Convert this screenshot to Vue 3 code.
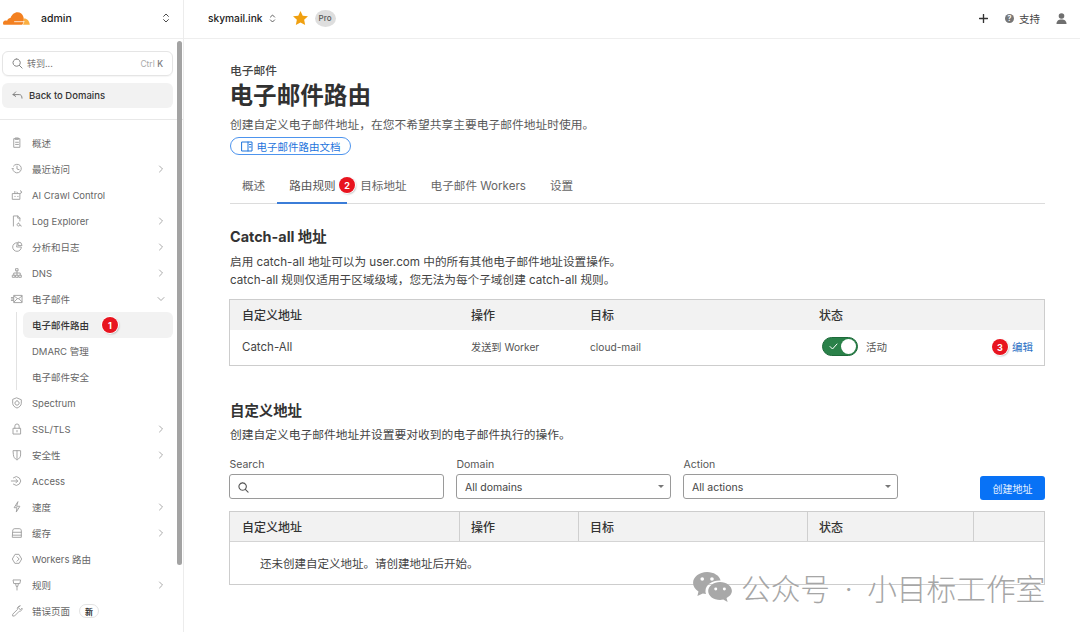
<script setup>
const navTop = [
  { label: '概述', icon: 'M5 3h8v12H5zM7 2h4v2H7zM7 8h4M7 11h4' },
  { label: '最近访问', arrow: 'right', icon: 'M4 5a6 6 0 1 1-1 4M9 5v4l3 1M2 8l1 1 1-1' },
  { label: 'AI Crawl Control', icon: 'M3 7h10v8H3zM6 7V4M10 7 9 5M6 11h.5M10 11h.5M14 3l.5 1.5L16 5l-1.500.5L14 7' },
  { label: 'Log Explorer', arrow: 'right', icon: 'M4 16V2h6l3 3v4M10 2v3h3M11 12a2 2 0 1 0 .1 0M13 15l2 1' },
  { label: '分析和日志', arrow: 'right', icon: 'M9 3a6 6 0 1 0 6 6H9zM11 2a5 5 0 0 1 5 5h-5z' },
  { label: 'DNS', arrow: 'right', icon: 'M7.500 3h3v3h-3zM3 12h3v3H3zM7.500 12h3v3h-3zM12 12h3v3h-3zM9 6v6M4.500 12V9h9v3' }
]
const navMail = { label: '电子邮件', arrow: 'down', icon: 'M5 4h11v10H5zM5 5l5.500 4L16 5M5 13l4-4M16 13l-4-4M1 7h3M1 9h3M1 11h3' }
const navSub = ['电子邮件路由', 'DMARC 管理', '电子邮件安全']
const navBottom = [
  { label: 'Spectrum', icon: 'M9 2l6 2.500v5c0 3-3 5.500-6 6.500-3-1-6-3.500-6-6.500v-5zM9 6a3 3 0 1 0 .1 0' },
  { label: 'SSL/TLS', arrow: 'right', icon: 'M4 8h10v8H4zM6 8V5a3 3 0 0 1 6 0v3M9 11v2' },
  { label: '安全性', arrow: 'right', icon: 'M4 3h10v6c0 3-2 5-5 7-3-2-5-4-5-7zM9 3v11' },
  { label: 'Access', icon: 'M4 4.500a6 6 0 1 1 0 9M1 9h9M7.500 6.500 10 9l-2.500 2.500' },
  { label: '速度', arrow: 'right', icon: 'M10 2 5 10h4l-1 6 5-8H9z' },
  { label: '缓存', arrow: 'right', icon: 'M3 6c0-2 1-3 3-3h6c2 0 3 1 3 3v9H3zM3 8h12M3 12h12' },
  { label: 'Workers 路由', icon: 'M6 3 2.500 9 6 15h6l3.500-6L12 3zM9 6l3 3-3 3' },
  { label: '规则', arrow: 'right', icon: 'M4 2h10l-1 5H5zM7 7l1 4h2l1-4M9 11v5' },
  { label: '错误页面', tag: '新', icon: 'M13 2a3.500 3.500 0 0 0-3.300 4.800L3 13.500V16h2.500l6.700-6.700A3.500 3.500 0 0 0 16 5l-2 2-2-1-1-2 2-2z' }
]
const tabs = ['概述', '路由规则', '目标地址', '电子邮件 Workers', '设置']
</script>

<template>
  <div class="page">
    <aside class="side">
      <div class="side-head">
        <svg class="logo" width="28" height="15" viewBox="0 0 29 15">
          <path d="M21 14H1.500C.6 12.400 1 10.200 3 9.600c.8-.2 1.700-.1 2.300.3C6 7.800 7.500 6.800 8.800 7 10 3.300 13 1 16 1c3 0 5.400 2 6.200 5 1 3 .2 5.800-1.200 8z" />
          <path d="M22.300 7.500c3-.5 6 1.700 6.500 6.500h-7c1-2 1-4.500.5-6.500z" />
          <path stroke-width=".8" d="M13 10.800h10" />
        </svg>
        <span class="account">admin</span>
        <svg class="updown" width="8" height="12" viewBox="0 0 10 14"><path d="M2 5l3-3 3 3M2 9l3 3 3-3" /></svg>
      </div>
      <div class="side-body">
        <div class="side-top">
          <div class="jump">
            <svg width="11" height="11" viewBox="0 0 12 12"><path d="M5 1a4 4 0 1 0 .1 0M8 8l3 3" /></svg>
            <span class="jump-text">转到...</span>
            <span class="jump-key">Ctrl <b>K</b></span>
          </div>
          <div class="back">
            <svg width="11" height="9" viewBox="0 0 12 10"><path d="M4 1 1 4l3 2M1 4h7c2 0 3 1.500 3 4" /></svg>
            <span>Back to Domains</span>
          </div>
        </div>
        <nav class="nav">
          <div v-for="item in navTop" :key="item.label" class="nav-item">
            <svg class="nav-icon" width="18" height="18" viewBox="0 0 18 18"><path :d="item.icon" /></svg>
            <span>{{ item.label }}</span>
            <svg v-if="item.arrow" class="chev" width="6" height="8" viewBox="0 0 8 10"><path d="M2 1l4 4-4 4" /></svg>
          </div>
          <div class="nav-item">
            <svg class="nav-icon" width="18" height="18" viewBox="0 0 18 18"><path :d="navMail.icon" /></svg>
            <span>{{ navMail.label }}</span>
            <svg class="chev chev-down" width="8" height="6" viewBox="0 0 10 8"><path d="M1 2l4 4 4-4" /></svg>
          </div>
          <div class="sub">
            <div v-for="(s, i) in navSub" :key="s" class="sub-item" :class="{ active: i === 0 }">
              {{ s }}
              <span v-if="i === 0" class="mark mark-nav">1</span>
            </div>
          </div>
          <div v-for="item in navBottom" :key="item.label" class="nav-item">
            <svg class="nav-icon" width="18" height="18" viewBox="0 0 18 18"><path :d="item.icon" /></svg>
            <span>{{ item.label }}</span>
            <span v-if="item.tag" class="tag">{{ item.tag }}</span>
            <svg v-if="item.arrow" class="chev" width="6" height="8" viewBox="0 0 8 10"><path d="M2 1l4 4-4 4" /></svg>
          </div>
        </nav>
        <div class="thumb"></div>
      </div>
    </aside>

    <div class="right">
      <header class="top">
        <span class="domain">skymail.ink</span>
        <svg class="updown small" width="7" height="11" viewBox="0 0 10 14"><path d="M2 5l3-3 3 3M2 9l3 3 3-3" /></svg>
        <svg class="star" width="15" height="14" viewBox="0 0 16 15"><path d="M8 0l2.400 5 5.600.7-4.100 3.800L13 15 8 12.300 3 15l1.100-5.500L0 5.700 5.600 5z" /></svg>
        <span class="plan">Pro</span>
        <span class="spacer"></span>
        <svg class="plus" width="9" height="9" viewBox="0 0 10 10"><path d="M5 .5v9M.5 5h9" /></svg>
        <span class="help">?</span>
        <span class="support">支持</span>
        <svg class="user" width="11" height="11" viewBox="0 0 11 11"><circle cx="5.500" cy="3" r="2.800" /><path d="M.5 11c0-3.300 2-4.500 5-4.500s5 1.200 5 4.500z" /></svg>
      </header>

      <main class="main">
        <div class="eyebrow">电子邮件</div>
        <h1 class="title">电子邮件路由</h1>
        <p class="lead">创建自定义电子邮件地址，在您不希望共享主要电子邮件地址时使用。</p>
        <a class="doc">
          <svg width="12" height="11" viewBox="0 0 12 11"><path d="M1 1h10v9H1zM7 1v9M8.500 3.500H10M8.500 6H10" /></svg>
          电子邮件路由文档
        </a>

        <div class="tabs">
          <span v-for="(t, i) in tabs" :key="t" class="tab" :class="{ on: i === 1 }">
            {{ t }}
            <span v-if="i === 1" class="mark mark-tab">2</span>
          </span>
        </div>

        <h2 class="h2 first">Catch-all 地址</h2>
        <p class="copy">启用 catch-all 地址可以为 user.com 中的所有其他电子邮件地址设置操作。<br>catch-all 规则仅适用于区域级域，您无法为每个子域创建 catch-all 规则。</p>

        <div class="tbl tbl-a">
          <div class="row head">
            <span class="c1">自定义地址</span><span class="c2">操作</span><span class="c3">目标</span><span class="c4">状态</span>
          </div>
          <div class="row body">
            <span class="c1 name">Catch-All</span>
            <span class="c2 small-text">发送到 Worker</span>
            <span class="c3 small-text">cloud-mail</span>
            <span class="c4 state">
              <span class="toggle">
                <svg width="9" height="7" viewBox="0 0 9 7"><path d="M1 3.500 3.500 6 8 1" /></svg>
                <i></i>
              </span>
              <span class="small-text active-text">活动</span>
            </span>
            <span class="edit">编辑<span class="mark mark-edit">3</span></span>
          </div>
        </div>

        <h2 class="h2 second">自定义地址</h2>
        <p class="copy one">创建自定义电子邮件地址并设置要对收到的电子邮件执行的操作。</p>

        <div class="filters">
          <label class="field f-search">
            <span>Search</span>
            <div class="box">
              <svg width="11" height="11" viewBox="0 0 12 12"><path d="M5 1a4 4 0 1 0 .1 0M8 8l3 3" /></svg>
            </div>
          </label>
          <label class="field f-domain">
            <span>Domain</span>
            <div class="box">All domains<i class="caret"></i></div>
          </label>
          <label class="field f-action">
            <span>Action</span>
            <div class="box">All actions<i class="caret"></i></div>
          </label>
          <button class="create">创建地址</button>
        </div>

        <div class="tbl tbl-b">
          <div class="row head">
            <span class="d1">自定义地址</span><span class="d2">操作</span><span class="d3">目标</span><span class="d4">状态</span><span class="d5"></span>
          </div>
          <div class="empty">还未创建自定义地址。请创建地址后开始。</div>
        </div>
      </main>
    </div>

    <div class="wm">
      <svg width="41" height="33" viewBox="0 0 38 33" preserveAspectRatio="none">
        <path d="M14 1C6.500 1 1 6 1 12c0 3.500 2 6.500 5 8.500L5 25l5-2.500c1 .3 2 .4 3 .5-.5-1.500-.5-2-.5-3 0-6 6-10.500 13-10.500h1C25.500 4.500 20 1 14 1z" />
        <path d="M26 11c-6 0-11 4-11 9s5 9 11 9c1 0 2-.2 3-.5l4 2.500-1-4c3-1.700 5-4.200 5-7 0-5-5-9-11-9z" />
        <circle cx="9.500" cy="8" r="1.700" fill="#fff" /><circle cx="18.500" cy="8" r="1.700" fill="#fff" />
        <circle cx="22" cy="18" r="1.400" fill="#fff" /><circle cx="30" cy="18" r="1.400" fill="#fff" />
      </svg>
      <span class="wm-text">公众号 · 小目标工作室</span>
    </div>
  </div>
</template>

<style>
html, body { margin: 0; background: #fff; }
</style>

<style scoped>
.page {
  position: relative;
  display: flex;
  width: 1080px;
  height: 632px;
  overflow: hidden;
  background: #fff;
  color: #36393a;
  font-family: Inter, "Noto Sans CJK SC", sans-serif;
}
svg { flex: none; }
svg path { fill: none; stroke-linecap: round; stroke-linejoin: round; }

/* sidebar */
.side {
  width: 184px;
  flex: none;
  border-right: 1px solid #ececec;
  box-sizing: border-box;
  display: flex;
  flex-direction: column;
}
.side-head {
  height: 39px;
  flex: none;
  box-sizing: border-box;
  border-bottom: 1px solid #eee;
  display: flex;
  align-items: center;
  padding: 0 13px 2px 2px;
}
.logo path:nth-child(1), .logo path:nth-child(2) { stroke: none; }
.logo path:nth-child(1) { fill: #f38020; }
.logo path:nth-child(2) { fill: #faae40; }
.logo path:nth-child(3) { stroke: #fff; }
.account { margin-left: 11px; font-size: 10.500px; font-weight: 500; color: #222; flex: 1; }
.updown path { stroke: #444; stroke-width: 1.200; }
.side-body { position: relative; flex: 1; }
.thumb {
  position: absolute;
  left: 177px;
  top: 2px;
  width: 5px;
  height: 524px;
  border-radius: 3px;
  background: #a3a3a3;
}
.side-top {
  padding: 12px 10px 11px 2px;
  border-bottom: 1px solid #e8e8e8;
}
.jump {
  height: 25px;
  box-sizing: border-box;
  border: 1px solid #e5e5e5;
  border-radius: 6px;
  display: flex;
  align-items: center;
  padding: 0 9px;
  font-size: 9px;
  color: #8a8a8a;
  box-shadow: 0 1px 1px rgba(0,0,0,.04);
}
.jump svg path { stroke: #777; stroke-width: 1; }
.jump-text { margin-left: 4px; flex: 1; color: #777; }
.jump-key { color: #aaa; font-size: 8.500px; }
.jump-key b { color: #777; font-weight: 500; }
.back {
  margin-top: 7px;
  height: 25px;
  background: #f2f2f2;
  border-radius: 6px;
  display: flex;
  align-items: center;
  padding: 0 9px 0 10px;
  gap: 6px;
  font-size: 9.500px;
  font-weight: 500;
  color: #333;
}
.back svg path { stroke: #777; stroke-width: 1; }
.nav { padding-top: 10px; }
.nav-item {
  height: 26px;
  display: flex;
  align-items: center;
  padding: 0 15px 0 8px;
  font-size: 9.500px;
  color: #666;
  position: relative;
}
.nav-icon { margin-right: 6px; width: 18px; height: 18px; transform: scale(.72); }
.nav-icon path { stroke: #a0a0a0; stroke-width: 1.300; }
.chev { position: absolute; left: 158px; top: 9px; }
.chev path { stroke: #a0a0a0; stroke-width: 1.200; }
.chev-down { left: 157px; top: 10px; }
.tag {
  margin-left: 9px;
  width: 20px;
  height: 14px;
  border: 1px solid #e3e3e3;
  border-radius: 8px;
  box-sizing: border-box;
  font-size: 8px;
  font-weight: 700;
  color: #333;
  display: flex;
  align-items: center;
  justify-content: center;
}
.sub {
  margin-left: 16px;
  border-left: 1px solid #e2e2e2;
  width: 157px;
  padding-left: 6px;
  box-sizing: border-box;
}
.sub-item {
  position: relative;
  height: 26px;
  display: flex;
  align-items: center;
  padding-left: 9px;
  font-size: 9.500px;
  color: #666;
  border-radius: 6px;
}
.sub-item.active { background: #f2f2f2; color: #333; font-weight: 500; }

.mark {
  position: absolute;
  width: 16px;
  height: 16px;
  border-radius: 50%;
  background: #e8141f;
  color: #fff;
  font-size: 9px;
  font-weight: 700;
  display: flex;
  align-items: center;
  justify-content: center;
  box-shadow: 0 0 0 1px #fff, 1px 1px 2px rgba(0,0,0,.35);
}
.mark-nav { left: 79px; top: 5px; }
.mark-tab { left: 62px; top: 7px; }
.mark-edit { left: -20px; top: 0; }

/* top bar */
.right { flex: 1; min-width: 0; display: flex; flex-direction: column; }
.top {
  height: 39px;
  flex: none;
  box-sizing: border-box;
  border-bottom: 1px solid #eee;
  display: flex;
  align-items: center;
  padding: 0 13px 2px 24px;
}
.domain { font-size: 10.200px; font-weight: 500; color: #222; }
.small { margin-left: 6px; }
.star { margin-left: 17px; }
.star path { fill: #f0a010; stroke: none; }
.plan {
  margin-left: 7px;
  width: 21px;
  height: 17px;
  border-radius: 50%;
  background: #dedede;
  color: #555;
  font-size: 8px;
  font-weight: 500;
  display: flex;
  align-items: center;
  justify-content: center;
}
.spacer { flex: 1; }
.plus path { stroke: #333; stroke-width: 1.500; }
.help {
  margin-left: 17px;
  width: 9px;
  height: 9px;
  border-radius: 50%;
  background: #777;
  color: #fff;
  font-size: 7px;
  font-weight: 700;
  display: flex;
  align-items: center;
  justify-content: center;
}
.support { margin-left: 5px; font-size: 10.500px; color: #444; }
.user { margin-left: 16px; }
.user path, .user circle { fill: #6f6f6f; stroke: none; }

/* main */
.main { padding: 25px 35px 0 46px; }
.eyebrow { font-size: 11.750px; line-height: 14px; font-weight: 500; color: #444; }
.title { margin: 2px 0 0 -.5px; font-size: 23.600px; line-height: 32px; font-weight: 700; color: #313131; }
.lead { margin: 4px 0 0; font-size: 11.750px; line-height: 18px; color: #595959; }
.doc {
  margin-top: 3px;
  width: 121px;
  height: 18px;
  box-sizing: border-box;
  border: 1px solid #4d94ee;
  border-radius: 9px;
  display: flex;
  align-items: center;
  justify-content: center;
  gap: 4px;
  font-size: 10.500px;
  color: #1e74dc;
}
.doc svg path { stroke: #1e74dc; stroke-width: 1; }
.tabs {
  margin-top: 15px;
  height: 34px;
  box-sizing: border-box;
  border-bottom: 1px solid #dcdcdc;
  display: flex;
}
.tab {
  position: relative;
  height: 34px;
  box-sizing: border-box;
  padding: 0 12px 4px;
  font-size: 11.600px;
  color: #666;
  display: flex;
  align-items: center;
  white-space: nowrap;
}
.tab.on { color: #555; border-bottom: 2px solid #3b7dd8; width: 70px; margin-right: 1px; padding-bottom: 2px; }
.h2 { margin: 0; font-size: 14.400px; line-height: 20px; font-weight: 700; color: #333; }
.first { margin-top: 23px; }
.second { margin-top: 35px; }
.copy { margin: 6px 0 0; font-size: 11.650px; line-height: 18px; color: #444; }
.copy.one { margin-top: 5px; font-size: 11.750px; }
.tbl {
  margin-left: -1px;
  box-sizing: border-box;
  border: 1px solid #cdcdcd;
}
.tbl-a { margin-top: 10px; height: 67px; }
.row { display: flex; align-items: center; position: relative; }
.head { height: 30px; box-sizing: border-box; padding-bottom: 2px; background: #f2f2f2; font-size: 12px; font-weight: 500; color: #333; }
.body { height: 35px; box-sizing: border-box; padding-bottom: 2px; font-size: 12px; }
.c1 { width: 241px; padding-left: 12px; box-sizing: border-box; }
.c2 { width: 119px; }
.c3 { width: 229px; }
.c4 { width: 170px; }
.name { font-size: 11.500px; color: #444; }
.small-text { font-size: 10.200px; color: #555; }
.active-text { font-size: 10.500px; }
.state { display: flex; align-items: center; gap: 8px; padding-left: 3px; box-sizing: border-box; }
.toggle {
  width: 36px;
  height: 19px;
  box-sizing: border-box;
  background: #2a8149;
  border: 1px solid #1e6a3a;
  border-radius: 10px;
  display: flex;
  align-items: center;
  justify-content: space-between;
  padding: 0 1px 0 6px;
}
.toggle svg path { stroke: #fff; stroke-width: 1; }
.toggle i { width: 15px; height: 15px; border-radius: 50%; background: #fff; display: block; }
.edit {
  position: relative;
  margin-left: 23px;
  font-size: 10.500px;
  color: #2a6fc4;
}
.filters {
  margin-top: 14px;
  margin-left: -1px;
  display: flex;
  align-items: flex-end;
}
.field { display: flex; flex-direction: column; gap: 3px; font-size: 10.500px; color: #555; }
.field > span { padding-left: .5px; }
.f-search { width: 215px; }
.f-domain { width: 215px; margin-left: 12px; }
.f-action { width: 215px; margin-left: 12px; }
.box {
  position: relative;
  height: 25px;
  box-sizing: border-box;
  border: 1px solid #9a9a9a;
  border-radius: 3px;
  display: flex;
  align-items: center;
  padding: 1px 8px 0;
  font-size: 10.500px;
  color: #444;
}
.box svg path { stroke: #555; stroke-width: 1.200; }
.caret {
  position: absolute;
  right: 6px;
  top: 10px;
  border-left: 3.500px solid transparent;
  border-right: 3.500px solid transparent;
  border-top: 3.500px solid #777;
}
.create {
  margin-left: 82px;
  margin-bottom: -1px;
  width: 65px;
  height: 24px;
  border: none;
  border-radius: 3px;
  background: #0872f6;
  color: #e8f2ff;
  font: inherit;
  font-size: 10px;
}
.tbl-b { margin-top: 12px; height: 74px; }
.tbl-b .head { height: 30px; padding-bottom: 0; border-bottom: 1px solid #d4d4d4; align-items: stretch; }
.tbl-b .head span { display: flex; align-items: center; border-right: 1px solid #cfcfcf; box-sizing: border-box; }
.d1 { width: 230px; padding-left: 12px; }
.d2 { width: 119px; padding-left: 11px; }
.d3 { width: 229px; padding-left: 11px; }
.d4 { width: 166px; padding-left: 11px; }
.d5 { flex: 1; border-right: none !important; }
.empty { padding: 12px 0 0 30px; font-size: 11.500px; line-height: 20px; color: #444; }

/* 水印 */
.wm {
  position: absolute;
  left: 692px;
  top: 571px;
  display: flex;
  align-items: flex-start;
  gap: 8px;
  color: #a6a6a6;
  font-size: 29.700px;
  font-weight: 300;
  line-height: 34px;
  word-spacing: 6px;
  white-space: nowrap;
}
.wm-text { margin-top: 1px; }
.wm svg path { fill: #a8a8a8; stroke: none; }
</style>
